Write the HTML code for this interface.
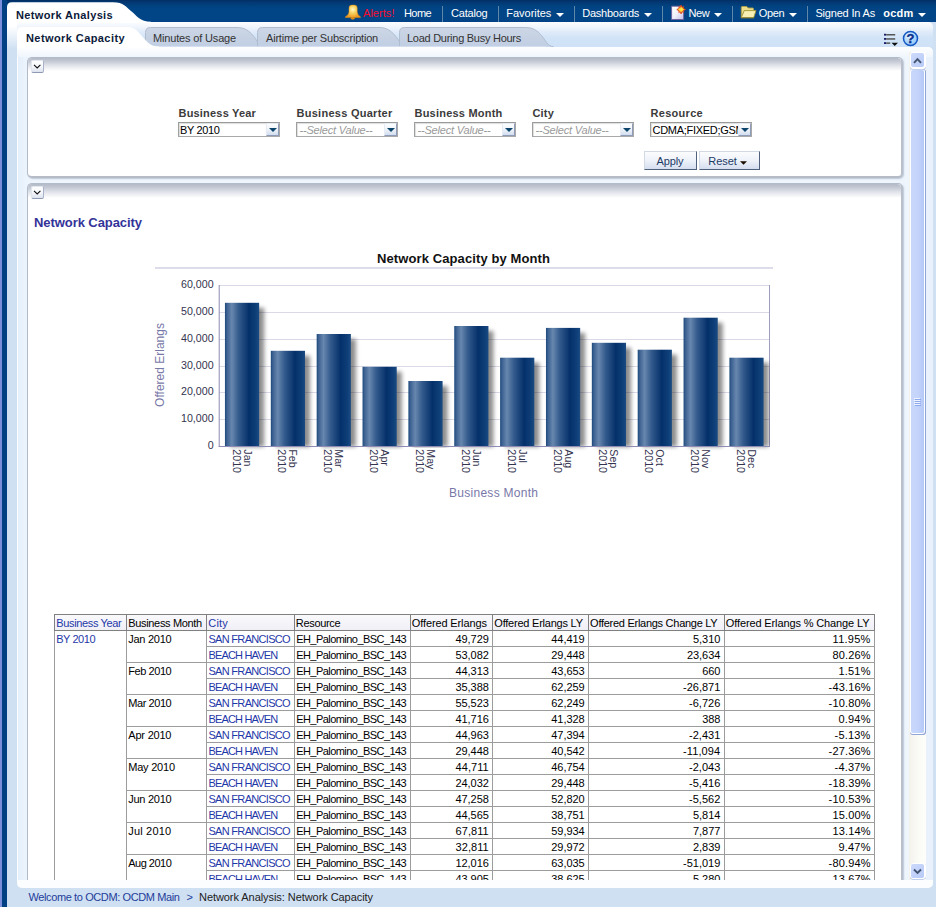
<!DOCTYPE html>
<html lang="en">
<head>
<meta charset="utf-8">
<title>Network Analysis - Network Capacity</title>
<style>
*{box-sizing:border-box;margin:0;padding:0}
html,body{width:936px;height:907px;overflow:hidden}
body{position:relative;background:#cfe0f3;font-family:"Liberation Sans",sans-serif;font-size:11px;color:#000}
.abs,.t,svg{position:absolute}
.t{white-space:pre;display:block}
#hdr{left:0;top:0;width:936px;height:22px;background:linear-gradient(#022c61 0,#033671 1.5px,#023a74 3px,#01427f 6px,#014586 9px,#014586 20px,#003f8a 22px)}
#lstrip1{left:0;top:0;width:2px;height:907px;background:#7a8edb}
#lstrip2{left:2px;top:0;width:5px;height:907px;background:#014083}
#shell{left:7px;top:22px;width:929px;height:866px;background:#cfe0f3}
#lgrad{left:7px;top:22px;width:10px;height:27px;background:linear-gradient(#fff 0,#fff 4px,#cfe0f3 100%)}
#tabbar{left:17px;top:22px;width:916px;height:25px;background:linear-gradient(#fcfdff 0,#f0f6fd 20%,#deeaf9 42%,#d1e3f7 65%,#cfe2f7 100%);border-radius:0 5px 0 0}
#inner{left:17px;top:47px;width:916px;height:841px;background:linear-gradient(to right,#e4effb 0,#ebf3fc 8px,#eef5fd 12px,#eef5fd 100%);border-radius:0 5px 5px 5px}
#innertop{left:17px;top:47px;width:916px;height:10px;background:linear-gradient(#fdfeff,#f0f6fd);border-radius:0 5px 0 0}
#innerbot{left:17px;top:880px;width:916px;height:8px;background:#fbfdff;border-radius:0 0 5px 5px}
#crumb{left:7px;top:888px;width:929px;height:19px;background:#cfe0f3}
.sep{top:6px;width:2px;height:16px;border-left:1px solid #003f80;border-right:1px solid #6089a9}
.panel{background:#fff;border-radius:5px;border:1px solid #b3bac8;border-right:2px solid #b9c0cc;border-bottom:2px solid #b5bcc8;box-shadow:1px 1px 1.5px rgba(150,160,182,.55)}
.ptop{left:0;top:0;right:0;height:13px;border-radius:4px 4px 0 0;background:linear-gradient(#b4bac8 0,#c4c9d4 25%,#e1e4ea 58%,#fff 100%)}
.cbtn{width:13px;height:13px;border-radius:2px;background:linear-gradient(#fff 0,#f4f6fa 50%,#dde3ee 100%);border:1px solid #e3e7ee;border-right-color:#a9b2c8;border-bottom-color:#8e99b4}
.sel{height:15px;width:102px;background:#fff;border:1px solid #a9aaa8;border-top-color:#9a9b99;border-left-color:#9fa09e;box-shadow:inset 1px 1px 1px #dcdedd}
.sel i{position:absolute;right:0;top:0;width:13px;height:13px;background:linear-gradient(#fdfeff,#eef3fa 50%,#d2ddee);border:1px solid #e6ebf4;border-right-color:#8e9cb9;border-bottom-color:#8e9cb9}
.sel i:after{content:"";position:absolute;left:1.5px;top:4px;border:4px solid transparent;border-top:4.5px solid #0b456c;border-bottom:0}
.btn{height:19.5px;background:linear-gradient(#fbfcfe 0,#eef2f9 50%,#d5deef 100%);border:1px solid #d3d9e4;border-right:1px solid #4f617c;border-bottom:1.5px solid #4f617c}
</style>
</head>
<body>
<div id="hdr" class="abs"></div>
<div id="shell" class="abs"></div>
<div id="lgrad" class="abs"></div>
<div id="tabbar" class="abs"></div>
<div id="inner" class="abs"></div>
<div class="abs" style="left:17px;top:52px;width:1px;height:830px;background:#fbfdff"></div><div class="abs" style="left:926px;top:52px;width:7px;height:830px;background:#e9f2fc"></div><div id="innertop" class="abs"></div>
<div id="crumb" class="abs"></div>
<svg style="left:0;top:0" width="160" height="30" viewBox="0 0 160 30"><defs><linearGradient id="pt" x1="0" y1="0" x2="0" y2="1"><stop offset="0" stop-color="#fff"/><stop offset="1" stop-color="#fff"/></linearGradient></defs><path d="M7,23 L7,7 Q7,2.2 12,2.2 L113,2.2 C124,2.2 126,7 131,11 S140,21.8 151,21.8 L151,23 Z" fill="#fff"/></svg>
<span class="t" style="left:16px;top:9.69px;font-size:11px;line-height:11px;font-weight:bold;color:#0b1a3a;letter-spacing:0.356px;">Network Analysis</span>
<svg style="left:344px;top:4px" width="18" height="17" viewBox="0 0 18 17"><defs><radialGradient id="bl" cx="8.8" cy="5.5" r="8.5" gradientUnits="userSpaceOnUse"><stop offset="0" stop-color="#fff7c8"/><stop offset=".4" stop-color="#f7d565"/><stop offset="1" stop-color="#ec951a"/></radialGradient></defs><ellipse cx="8.8" cy="14.3" rx="1.9" ry="1.4" fill="#d78a14"/><path d="M5,4 Q5,1.1 8,1.1 L10.2,1.1 Q13.2,1.1 13.2,4 L13.2,8 Q13.4,11 16.4,12.7 L16.4,13.6 L1.4,13.6 L1.4,12.7 Q4.8,11 5,8 Z" fill="url(#bl)" stroke="#e08f18" stroke-width=".5"/></svg><span class="t" style="left:363px;top:7.69px;font-size:11px;line-height:11px;color:#f80a2c;letter-spacing:0.045px;">Alerts!</span><span class="t" style="left:404px;top:7.69px;font-size:11px;line-height:11px;color:#fff;letter-spacing:-0.586px;">Home</span><span class="t" style="left:451px;top:7.69px;font-size:11px;line-height:11px;color:#fff;letter-spacing:-0.203px;">Catalog</span><span class="t" style="left:506.3px;top:7.69px;font-size:11px;line-height:11px;color:#fff;letter-spacing:-0.028px;">Favorites</span><svg style="left:555.5px;top:13px" width="8" height="4" viewBox="0 0 8 4"><path d="M0,0 H8 L4,4 Z" fill="#fff"/></svg><span class="t" style="left:582.3px;top:7.69px;font-size:11px;line-height:11px;color:#fff;letter-spacing:-0.263px;">Dashboards</span><svg style="left:643.5px;top:13px" width="8" height="4" viewBox="0 0 8 4"><path d="M0,0 H8 L4,4 Z" fill="#fff"/></svg><svg style="left:670px;top:3px" width="17" height="18" viewBox="0 0 17 18"><defs><linearGradient id="ng" x1="0" y1="0" x2="1" y2="1"><stop offset="0" stop-color="#fff"/><stop offset=".5" stop-color="#f1f0fa"/><stop offset="1" stop-color="#c4c0e6"/></linearGradient></defs><path d="M1.6,3.2 H10.5 L13.6,6.3 V16.5 H1.6 Z" fill="url(#ng)" stroke="#6e609e" stroke-width=".9"/><path d="M11.1,2.2 L12,4.6 L13.4,3.4 L13.1,5.4 L15.4,6.6 L13.1,7.6 L13.4,9.6 L12,8.5 L11.1,10.9 L10.2,8.5 L8.8,9.6 L9.1,7.6 L6.8,6.6 L9.1,5.4 L8.8,3.4 L10.2,4.6 Z" fill="#ffe23c" stroke="#de3f16" stroke-width=".9" stroke-linejoin="round"/></svg><span class="t" style="left:688.6px;top:7.69px;font-size:11px;line-height:11px;color:#fff;letter-spacing:-0.439px;">New</span><svg style="left:713.7px;top:13px" width="8" height="4" viewBox="0 0 8 4"><path d="M0,0 H8 L4,4 Z" fill="#fff"/></svg><svg style="left:740px;top:5px" width="17" height="14" viewBox="0 0 17 14"><path d="M1.3,12.4 V2.4 Q1.3,1.5 2.2,1.5 H6.8 L8,3 H12.6 Q13.5,3 13.5,3.9 V5.6 H4.5 Z" fill="#e9dd8c" stroke="#b0a044" stroke-width=".9"/><path d="M4.3,5.6 H16 L13.7,12.6 H1.3 Z" fill="#f6f0b4" stroke="#a89838" stroke-width=".9" stroke-linejoin="round"/><path d="M1.3,12.9 H13.7" stroke="#94842c" stroke-width=".8"/></svg><span class="t" style="left:758.7px;top:7.69px;font-size:11px;line-height:11px;color:#fff;letter-spacing:-0.355px;">Open</span><svg style="left:788.7px;top:13px" width="8" height="4" viewBox="0 0 8 4"><path d="M0,0 H8 L4,4 Z" fill="#fff"/></svg><span class="t" style="left:815.4px;top:7.69px;font-size:11px;line-height:11px;color:#fff;letter-spacing:-0.182px;">Signed In As</span><span class="t" style="left:883.2px;top:7.69px;font-size:11px;line-height:11px;font-weight:bold;color:#fff;letter-spacing:0.289px;">ocdm</span><svg style="left:917.5px;top:13px" width="8" height="4" viewBox="0 0 8 4"><path d="M0,0 H8 L4,4 Z" fill="#fff"/></svg><div class="abs sep" style="left:441px"></div><div class="abs sep" style="left:497px"></div><div class="abs sep" style="left:573px"></div><div class="abs sep" style="left:661px"></div><div class="abs sep" style="left:731px"></div><div class="abs sep" style="left:806px"></div>
<svg style="left:0;top:22px" width="936" height="26" viewBox="0 22 936 26"><defs><linearGradient id="tg" x1="0" y1="0" x2="0" y2="1"><stop offset="0" stop-color="#ccd6e5"/><stop offset=".5" stop-color="#c6d1e3"/><stop offset="1" stop-color="#c1cfe4"/></linearGradient></defs><path d="M145.5,46.6 L145.5,32.5 Q145.5,27.5 150.5,27.5 L237,27.5 C245,27.5 249,31 253,35.5 S259,46.6 265,46.6 Z" fill="url(#tg)"/><path d="M145.5,46.6 L145.5,32.5 Q145.5,27.5 150.5,27.5 L237,27.5 C245,27.5 249,31 253,35.5 S259,46.6 265,46.6" fill="none" stroke="#b1bdd0" stroke-width="1"/><path d="M257.5,46.6 L257.5,32.5 Q257.5,27.5 262.5,27.5 L379,27.5 C387,27.5 391,31 395,35.5 S401,46.6 407,46.6 Z" fill="url(#tg)"/><path d="M257.5,46.6 L257.5,32.5 Q257.5,27.5 262.5,27.5 L379,27.5 C387,27.5 391,31 395,35.5 S401,46.6 407,46.6" fill="none" stroke="#b1bdd0" stroke-width="1"/><path d="M399.5,46.6 L399.5,32.5 Q399.5,27.5 404.5,27.5 L525.5,27.5 C533.5,27.5 537.5,31 541.5,35.5 S547.5,46.6 553.5,46.6 Z" fill="url(#tg)"/><path d="M399.5,46.6 L399.5,32.5 Q399.5,27.5 404.5,27.5 L525.5,27.5 C533.5,27.5 537.5,31 541.5,35.5 S547.5,46.6 553.5,46.6" fill="none" stroke="#b1bdd0" stroke-width="1"/><rect x="146" y="46" width="400" height="1" fill="#d9e2ef" opacity=".7"/><path d="M17,48 L17,32 Q17,27 22,27 L127,27 C136,27 139,33 143,37.3 S150,46.6 159,46.6 L159,48 Z" fill="#fff"/></svg><span class="t" style="left:26px;top:32.69px;font-size:11px;line-height:11px;font-weight:bold;color:#0b1a3a;letter-spacing:0.418px;">Network Capacity</span><span class="t" style="left:153px;top:32.69px;font-size:11px;line-height:11px;color:#333;letter-spacing:-0.163px;">Minutes of Usage</span><span class="t" style="left:266px;top:32.69px;font-size:11px;line-height:11px;color:#333;letter-spacing:-0.199px;">Airtime per Subscription</span><span class="t" style="left:407px;top:32.69px;font-size:11px;line-height:11px;color:#333;letter-spacing:-0.266px;">Load During Busy Hours</span><svg style="left:883px;top:32px" width="16" height="15" viewBox="0 0 16 15"><rect x="1" y="1.8" width="2.2" height="1.8" fill="#1c1c66"/><rect x="3.2" y="2" width="9" height="1.5" fill="#555"/><rect x="1" y="6" width="2.2" height="1.8" fill="#1c1c66"/><rect x="3.2" y="6.2" width="9" height="1.5" fill="#555"/><rect x="1" y="10.2" width="2.2" height="1.8" fill="#1c1c66"/><rect x="3.2" y="10.4" width="4" height="1.5" fill="#555"/><path d="M8.5,10.8 H15 L11.75,14 Z" fill="#111"/></svg><svg style="left:902px;top:30px" width="17" height="17" viewBox="0 0 17 17"><defs><radialGradient id="hg" cx=".4" cy=".3" r=".8"><stop offset="0" stop-color="#e6f4ff"/><stop offset="1" stop-color="#7fbcf8"/></radialGradient></defs><circle cx="8.5" cy="8.5" r="7" fill="url(#hg)" stroke="#1458c4" stroke-width="1.5"/><text x="8.5" y="13.1" text-anchor="middle" font-family="Liberation Sans, sans-serif" font-weight="bold" font-size="13" fill="#0a2f8f" stroke="#0a2f8f" stroke-width=".35">?</text></svg>
<div id="view" class="abs" style="left:0;top:0;width:936px;height:880px;overflow:hidden"><div class="abs panel" style="left:27px;top:57px;width:876px;height:121px"><div class="abs ptop"></div></div><div class="abs cbtn" style="left:31px;top:60px"><svg style="left:1.2px;top:3.1px" width="9" height="5" viewBox="0 0 9 5"><path d="M1,0.8 L4.2,4 L7.4,0.8" fill="none" stroke="#111" stroke-width="1.1"/></svg></div><span class="t" style="left:178.5px;top:108.39px;font-size:11px;line-height:11px;font-weight:bold;color:#3b3b3b;letter-spacing:0.191px;">Business Year</span><span class="t" style="left:296.5px;top:108.39px;font-size:11px;line-height:11px;font-weight:bold;color:#3b3b3b;letter-spacing:0.269px;">Business Quarter</span><span class="t" style="left:414.5px;top:108.39px;font-size:11px;line-height:11px;font-weight:bold;color:#3b3b3b;letter-spacing:0.218px;">Business Month</span><span class="t" style="left:532.5px;top:108.39px;font-size:11px;line-height:11px;font-weight:bold;color:#3b3b3b;letter-spacing:0.180px;">City</span><span class="t" style="left:650.5px;top:108.39px;font-size:11px;line-height:11px;font-weight:bold;color:#3b3b3b;letter-spacing:0.295px;">Resource</span><div class="abs sel" style="left:178px;top:122px"><i></i></div><span class="t" style="left:180px;top:125.19px;font-size:11px;line-height:11px;letter-spacing:-0.359px;">BY 2010</span><div class="abs sel" style="left:296px;top:122px"><i></i></div><span class="t" style="left:299.5px;top:125.19px;font-size:11px;line-height:11px;font-style:italic;color:#9a9a9a;letter-spacing:-0.188px;">--Select Value--</span><div class="abs sel" style="left:414px;top:122px"><i></i></div><span class="t" style="left:417.5px;top:125.19px;font-size:11px;line-height:11px;font-style:italic;color:#9a9a9a;letter-spacing:-0.188px;">--Select Value--</span><div class="abs sel" style="left:532px;top:122px"><i></i></div><span class="t" style="left:535.5px;top:125.19px;font-size:11px;line-height:11px;font-style:italic;color:#9a9a9a;letter-spacing:-0.188px;">--Select Value--</span><div class="abs sel" style="left:650px;top:122px"><i></i></div><div class="abs" style="left:652px;top:124px;width:86px;height:13px;overflow:hidden"><span class="t" style="left:0.5px;top:1.19px;font-size:11px;line-height:11px;letter-spacing:-0.282px;">CDMA;FIXED;GSM</span></div><div class="abs btn" style="left:644px;top:150.5px;width:53px"></div><span class="t" style="left:656.5px;top:155.69px;font-size:11px;line-height:11px;color:#1d3a66;letter-spacing:-0.146px;">Apply</span><div class="abs btn" style="left:699px;top:150.5px;width:61px"></div><span class="t" style="left:708.3px;top:155.69px;font-size:11px;line-height:11px;color:#1d3a66;letter-spacing:-0.070px;">Reset</span><svg style="left:740.2px;top:161px" width="7" height="3.8" viewBox="0 0 8 4"><path d="M0,0 H8 L4,4 Z" fill="#1a0d00"/></svg><div class="abs panel" style="left:27px;top:183px;width:876px;height:720px;border-radius:5px 5px 0 0"><div class="abs ptop" style="height:14px"></div></div><div class="abs cbtn" style="left:31px;top:186px"><svg style="left:1.2px;top:3.1px" width="9" height="5" viewBox="0 0 9 5"><path d="M1,0.8 L4.2,4 L7.4,0.8" fill="none" stroke="#111" stroke-width="1.1"/></svg></div><span class="t" style="left:34px;top:216.30px;font-size:13px;line-height:13px;font-weight:bold;color:#333399;letter-spacing:-0.068px;">Network Capacity</span><svg style="left:0;top:240px" width="936" height="280" viewBox="0 240 936 280" font-family="Liberation Sans, sans-serif"><defs><linearGradient id="bg" x1="0" y1="0" x2="1" y2="0"><stop offset="0" stop-color="#1d497c"/><stop offset=".06" stop-color="#3d6292"/><stop offset=".2" stop-color="#6787ae"/><stop offset=".4" stop-color="#345b8d"/><stop offset=".7" stop-color="#04306a"/><stop offset=".9" stop-color="#0f3f78"/><stop offset="1" stop-color="#1b4b82"/></linearGradient><filter id="sh" x="-20%" y="-10%" width="160%" height="120%"><feGaussianBlur in="SourceAlpha" stdDeviation="2.2"/><feOffset dx="4.5" dy="4.5"/><feComponentTransfer><feFuncA type="linear" slope=".45"/></feComponentTransfer></filter><clipPath id="pc"><rect x="219" y="280" width="551" height="176"/></clipPath></defs><text x="463.5" y="262.5" text-anchor="middle" font-size="13" font-weight="bold" fill="#111" textLength="173" lengthAdjust="spacing">Network Capacity by Month</text><rect x="155" y="267.1" width="618" height="1.7" fill="#d6d6e8"/><rect x="219" y="285" width="551" height="1" fill="#d9d9e7"/><rect x="219" y="312" width="551" height="1" fill="#d9d9e7"/><rect x="219" y="339" width="551" height="1" fill="#d9d9e7"/><rect x="219" y="366" width="551" height="1" fill="#d9d9e7"/><rect x="219" y="392" width="551" height="1" fill="#d9d9e7"/><rect x="219" y="419" width="551" height="1" fill="#d9d9e7"/><rect x="769" y="285" width="1" height="161" fill="#9d9dc0"/><g clip-path="url(#pc)"><rect x="224.95" y="302.80" width="34.20" height="139.00" fill="#000" filter="url(#sh)"/><rect x="270.81" y="350.80" width="34.20" height="91.00" fill="#000" filter="url(#sh)"/><rect x="316.67" y="334.00" width="34.20" height="107.80" fill="#000" filter="url(#sh)"/><rect x="362.53" y="366.80" width="34.20" height="75.00" fill="#000" filter="url(#sh)"/><rect x="408.39" y="381.00" width="34.20" height="60.80" fill="#000" filter="url(#sh)"/><rect x="454.25" y="326.00" width="34.20" height="115.80" fill="#000" filter="url(#sh)"/><rect x="500.11" y="357.70" width="34.20" height="84.10" fill="#000" filter="url(#sh)"/><rect x="545.97" y="327.90" width="34.20" height="113.90" fill="#000" filter="url(#sh)"/><rect x="591.83" y="342.80" width="34.20" height="99.00" fill="#000" filter="url(#sh)"/><rect x="637.69" y="349.70" width="34.20" height="92.10" fill="#000" filter="url(#sh)"/><rect x="683.55" y="317.70" width="34.20" height="124.10" fill="#000" filter="url(#sh)"/><rect x="729.41" y="357.70" width="34.20" height="84.10" fill="#000" filter="url(#sh)"/></g><rect x="224.95" y="302.80" width="34.20" height="143.50" fill="url(#bg)"/><rect x="270.81" y="350.80" width="34.20" height="95.50" fill="url(#bg)"/><rect x="316.67" y="334.00" width="34.20" height="112.30" fill="url(#bg)"/><rect x="362.53" y="366.80" width="34.20" height="79.50" fill="url(#bg)"/><rect x="408.39" y="381.00" width="34.20" height="65.30" fill="url(#bg)"/><rect x="454.25" y="326.00" width="34.20" height="120.30" fill="url(#bg)"/><rect x="500.11" y="357.70" width="34.20" height="88.60" fill="url(#bg)"/><rect x="545.97" y="327.90" width="34.20" height="118.40" fill="url(#bg)"/><rect x="591.83" y="342.80" width="34.20" height="103.50" fill="url(#bg)"/><rect x="637.69" y="349.70" width="34.20" height="96.60" fill="url(#bg)"/><rect x="683.55" y="317.70" width="34.20" height="128.60" fill="url(#bg)"/><rect x="729.41" y="357.70" width="34.20" height="88.60" fill="url(#bg)"/><rect x="218.7" y="285" width="1" height="162" fill="#8c8cb6"/><rect x="218.7" y="446" width="551.3" height="1" fill="#8c8cb6"/><text x="213.6" y="288.30" text-anchor="end" font-size="10.67" fill="#33334f">60,000</text><text x="213.6" y="315.30" text-anchor="end" font-size="10.67" fill="#33334f">50,000</text><text x="213.6" y="342.30" text-anchor="end" font-size="10.67" fill="#33334f">40,000</text><text x="213.6" y="369.30" text-anchor="end" font-size="10.67" fill="#33334f">30,000</text><text x="213.6" y="395.30" text-anchor="end" font-size="10.67" fill="#33334f">20,000</text><text x="213.6" y="422.30" text-anchor="end" font-size="10.67" fill="#33334f">10,000</text><text x="213.6" y="449.30" text-anchor="end" font-size="10.67" fill="#33334f">0</text><text transform="translate(243.55,449.3) rotate(90)" font-size="10.67" fill="#33334f">Jan</text><text transform="translate(232.55,449.3) rotate(90)" font-size="10.67" fill="#33334f">2010</text><text transform="translate(289.41,449.3) rotate(90)" font-size="10.67" fill="#33334f">Feb</text><text transform="translate(278.41,449.3) rotate(90)" font-size="10.67" fill="#33334f">2010</text><text transform="translate(335.27,449.3) rotate(90)" font-size="10.67" fill="#33334f">Mar</text><text transform="translate(324.27,449.3) rotate(90)" font-size="10.67" fill="#33334f">2010</text><text transform="translate(381.13,449.3) rotate(90)" font-size="10.67" fill="#33334f">Apr</text><text transform="translate(370.13,449.3) rotate(90)" font-size="10.67" fill="#33334f">2010</text><text transform="translate(426.99,449.3) rotate(90)" font-size="10.67" fill="#33334f">May</text><text transform="translate(415.99,449.3) rotate(90)" font-size="10.67" fill="#33334f">2010</text><text transform="translate(472.85,449.3) rotate(90)" font-size="10.67" fill="#33334f">Jun</text><text transform="translate(461.85,449.3) rotate(90)" font-size="10.67" fill="#33334f">2010</text><text transform="translate(518.71,449.3) rotate(90)" font-size="10.67" fill="#33334f">Jul</text><text transform="translate(507.71,449.3) rotate(90)" font-size="10.67" fill="#33334f">2010</text><text transform="translate(564.57,449.3) rotate(90)" font-size="10.67" fill="#33334f">Aug</text><text transform="translate(553.57,449.3) rotate(90)" font-size="10.67" fill="#33334f">2010</text><text transform="translate(610.43,449.3) rotate(90)" font-size="10.67" fill="#33334f">Sep</text><text transform="translate(599.43,449.3) rotate(90)" font-size="10.67" fill="#33334f">2010</text><text transform="translate(656.29,449.3) rotate(90)" font-size="10.67" fill="#33334f">Oct</text><text transform="translate(645.29,449.3) rotate(90)" font-size="10.67" fill="#33334f">2010</text><text transform="translate(702.15,449.3) rotate(90)" font-size="10.67" fill="#33334f">Nov</text><text transform="translate(691.15,449.3) rotate(90)" font-size="10.67" fill="#33334f">2010</text><text transform="translate(748.01,449.3) rotate(90)" font-size="10.67" fill="#33334f">Dec</text><text transform="translate(737.01,449.3) rotate(90)" font-size="10.67" fill="#33334f">2010</text><text transform="translate(163.5,365) rotate(-90)" text-anchor="middle" font-size="12" fill="#7878a8">Offered Erlangs</text><text x="493.5" y="497" text-anchor="middle" font-size="12" fill="#7878a8" textLength="89" lengthAdjust="spacing">Business Month</text></svg><div class="abs" style="left:54px;top:614px;width:821px;height:16px;background:linear-gradient(#fafafd,#efeff6)"></div><div class="abs" style="left:54px;top:614px;width:1px;height:288px;background:#9c9c9c"></div><div class="abs" style="left:126px;top:614px;width:1px;height:288px;background:#9c9c9c"></div><div class="abs" style="left:206px;top:614px;width:1px;height:288px;background:#9c9c9c"></div><div class="abs" style="left:293.5px;top:614px;width:1px;height:288px;background:#9c9c9c"></div><div class="abs" style="left:409.5px;top:614px;width:1px;height:288px;background:#9c9c9c"></div><div class="abs" style="left:492px;top:614px;width:1px;height:288px;background:#9c9c9c"></div><div class="abs" style="left:587.8px;top:614px;width:1px;height:288px;background:#9c9c9c"></div><div class="abs" style="left:723.5px;top:614px;width:1px;height:288px;background:#9c9c9c"></div><div class="abs" style="left:873.8px;top:614px;width:1px;height:288px;background:#9c9c9c"></div><div class="abs" style="left:54px;top:614px;width:1px;height:16.5px;background:#808080"></div><div class="abs" style="left:126px;top:614px;width:1px;height:16.5px;background:#808080"></div><div class="abs" style="left:206px;top:614px;width:1px;height:16.5px;background:#808080"></div><div class="abs" style="left:293.5px;top:614px;width:1px;height:16.5px;background:#808080"></div><div class="abs" style="left:409.5px;top:614px;width:1px;height:16.5px;background:#808080"></div><div class="abs" style="left:492px;top:614px;width:1px;height:16.5px;background:#808080"></div><div class="abs" style="left:587.8px;top:614px;width:1px;height:16.5px;background:#808080"></div><div class="abs" style="left:723.5px;top:614px;width:1px;height:16.5px;background:#808080"></div><div class="abs" style="left:873.8px;top:614px;width:1px;height:16.5px;background:#808080"></div><div class="abs" style="left:54px;top:614px;width:820.8px;height:1px;background:#808080"></div><div class="abs" style="left:54px;top:629.5px;width:820.8px;height:1px;background:#808080"></div><div class="abs" style="left:206px;top:645.5px;width:668.8px;height:1px;background:#9c9c9c"></div><div class="abs" style="left:126px;top:661.5px;width:748.8px;height:1px;background:#9c9c9c"></div><div class="abs" style="left:206px;top:677.5px;width:668.8px;height:1px;background:#9c9c9c"></div><div class="abs" style="left:126px;top:693.5px;width:748.8px;height:1px;background:#9c9c9c"></div><div class="abs" style="left:206px;top:709.5px;width:668.8px;height:1px;background:#9c9c9c"></div><div class="abs" style="left:126px;top:725.5px;width:748.8px;height:1px;background:#9c9c9c"></div><div class="abs" style="left:206px;top:741.5px;width:668.8px;height:1px;background:#9c9c9c"></div><div class="abs" style="left:126px;top:757.5px;width:748.8px;height:1px;background:#9c9c9c"></div><div class="abs" style="left:206px;top:773.5px;width:668.8px;height:1px;background:#9c9c9c"></div><div class="abs" style="left:126px;top:789.5px;width:748.8px;height:1px;background:#9c9c9c"></div><div class="abs" style="left:206px;top:805.5px;width:668.8px;height:1px;background:#9c9c9c"></div><div class="abs" style="left:126px;top:821.5px;width:748.8px;height:1px;background:#9c9c9c"></div><div class="abs" style="left:206px;top:837.5px;width:668.8px;height:1px;background:#9c9c9c"></div><div class="abs" style="left:126px;top:853.5px;width:748.8px;height:1px;background:#9c9c9c"></div><div class="abs" style="left:206px;top:869.5px;width:668.8px;height:1px;background:#9c9c9c"></div><div class="abs" style="left:126px;top:885.5px;width:748.8px;height:1px;background:#9c9c9c"></div><div class="abs" style="left:206px;top:901.5px;width:668.8px;height:1px;background:#9c9c9c"></div><span class="t" style="left:56.3px;top:617.69px;font-size:11px;line-height:11px;color:#1f38a8;letter-spacing:-0.363px;">Business Year</span><span class="t" style="left:128.3px;top:617.69px;font-size:11px;line-height:11px;letter-spacing:-0.340px;">Business Month</span><span class="t" style="left:208.3px;top:617.69px;font-size:11px;line-height:11px;color:#1f38a8;letter-spacing:0.137px;">City</span><span class="t" style="left:295.8px;top:617.69px;font-size:11px;line-height:11px;letter-spacing:-0.322px;">Resource</span><span class="t" style="left:411.8px;top:617.69px;font-size:11px;line-height:11px;letter-spacing:-0.123px;">Offered Erlangs</span><span class="t" style="left:494.3px;top:617.69px;font-size:11px;line-height:11px;letter-spacing:-0.225px;">Offered Erlangs LY</span><span class="t" style="left:590.1px;top:617.69px;font-size:11px;line-height:11px;letter-spacing:-0.273px;">Offered Erlangs Change LY</span><span class="t" style="left:725.8px;top:617.69px;font-size:11px;line-height:11px;letter-spacing:-0.125px;">Offered Erlangs % Change LY</span><span class="t" style="left:56.2px;top:633.79px;font-size:11px;line-height:11px;color:#1f38a8;letter-spacing:-0.431px;">BY 2010</span><span class="t" style="left:128.3px;top:633.79px;font-size:11px;line-height:11px;letter-spacing:-0.283px;">Jan 2010</span><span class="t" style="left:208.4px;top:633.79px;font-size:11px;line-height:11px;color:#1f38a8;letter-spacing:-0.682px;">SAN FRANCISCO</span><span class="t" style="left:296.2px;top:633.79px;font-size:11px;line-height:11px;letter-spacing:-0.551px;">EH_Palomino_BSC_143</span><span class="t" style="left:455.5px;top:633.79px;font-size:11px;line-height:11px;letter-spacing:-0.059px;">49,729</span><span class="t" style="left:551.3px;top:633.79px;font-size:11px;line-height:11px;letter-spacing:-0.059px;">44,419</span><span class="t" style="left:693px;top:633.79px;font-size:11px;line-height:11px;letter-spacing:-0.046px;">5,310</span><span class="t" style="left:832.6px;top:633.79px;font-size:11px;line-height:11px;letter-spacing:0.250px;">11.95%</span><span class="t" style="left:208.4px;top:649.79px;font-size:11px;line-height:11px;color:#1f38a8;letter-spacing:-0.822px;">BEACH HAVEN</span><span class="t" style="left:296.2px;top:649.79px;font-size:11px;line-height:11px;letter-spacing:-0.551px;">EH_Palomino_BSC_143</span><span class="t" style="left:455.5px;top:649.79px;font-size:11px;line-height:11px;letter-spacing:-0.059px;">53,082</span><span class="t" style="left:551.3px;top:649.79px;font-size:11px;line-height:11px;letter-spacing:-0.059px;">29,448</span><span class="t" style="left:687px;top:649.79px;font-size:11px;line-height:11px;letter-spacing:-0.059px;">23,634</span><span class="t" style="left:832.6px;top:649.79px;font-size:11px;line-height:11px;letter-spacing:0.115px;">80.26%</span><span class="t" style="left:128.3px;top:665.79px;font-size:11px;line-height:11px;letter-spacing:-0.436px;">Feb 2010</span><span class="t" style="left:208.4px;top:665.79px;font-size:11px;line-height:11px;color:#1f38a8;letter-spacing:-0.682px;">SAN FRANCISCO</span><span class="t" style="left:296.2px;top:665.79px;font-size:11px;line-height:11px;letter-spacing:-0.551px;">EH_Palomino_BSC_143</span><span class="t" style="left:455.5px;top:665.79px;font-size:11px;line-height:11px;letter-spacing:-0.059px;">44,313</span><span class="t" style="left:551.3px;top:665.79px;font-size:11px;line-height:11px;letter-spacing:-0.059px;">43,653</span><span class="t" style="left:702.3px;top:665.79px;font-size:11px;line-height:11px;letter-spacing:-0.120px;">660</span><span class="t" style="left:838.6px;top:665.79px;font-size:11px;line-height:11px;letter-spacing:0.159px;">1.51%</span><span class="t" style="left:208.4px;top:681.79px;font-size:11px;line-height:11px;color:#1f38a8;letter-spacing:-0.822px;">BEACH HAVEN</span><span class="t" style="left:296.2px;top:681.79px;font-size:11px;line-height:11px;letter-spacing:-0.551px;">EH_Palomino_BSC_143</span><span class="t" style="left:455.5px;top:681.79px;font-size:11px;line-height:11px;letter-spacing:-0.059px;">35,388</span><span class="t" style="left:551.3px;top:681.79px;font-size:11px;line-height:11px;letter-spacing:-0.059px;">62,259</span><span class="t" style="left:683px;top:681.79px;font-size:11px;line-height:11px;letter-spacing:-0.002px;">-26,871</span><span class="t" style="left:828.6px;top:681.79px;font-size:11px;line-height:11px;letter-spacing:0.145px;">-43.16%</span><span class="t" style="left:128.3px;top:697.79px;font-size:11px;line-height:11px;letter-spacing:-0.436px;">Mar 2010</span><span class="t" style="left:208.4px;top:697.79px;font-size:11px;line-height:11px;color:#1f38a8;letter-spacing:-0.682px;">SAN FRANCISCO</span><span class="t" style="left:296.2px;top:697.79px;font-size:11px;line-height:11px;letter-spacing:-0.551px;">EH_Palomino_BSC_143</span><span class="t" style="left:455.5px;top:697.79px;font-size:11px;line-height:11px;letter-spacing:-0.059px;">55,523</span><span class="t" style="left:551.3px;top:697.79px;font-size:11px;line-height:11px;letter-spacing:-0.059px;">62,249</span><span class="t" style="left:689px;top:697.79px;font-size:11px;line-height:11px;letter-spacing:0.016px;">-6,726</span><span class="t" style="left:828.6px;top:697.79px;font-size:11px;line-height:11px;letter-spacing:0.145px;">-10.80%</span><span class="t" style="left:208.4px;top:713.79px;font-size:11px;line-height:11px;color:#1f38a8;letter-spacing:-0.822px;">BEACH HAVEN</span><span class="t" style="left:296.2px;top:713.79px;font-size:11px;line-height:11px;letter-spacing:-0.551px;">EH_Palomino_BSC_143</span><span class="t" style="left:455.5px;top:713.79px;font-size:11px;line-height:11px;letter-spacing:-0.059px;">41,716</span><span class="t" style="left:551.3px;top:713.79px;font-size:11px;line-height:11px;letter-spacing:-0.059px;">41,328</span><span class="t" style="left:702.3px;top:713.79px;font-size:11px;line-height:11px;letter-spacing:-0.120px;">388</span><span class="t" style="left:838.6px;top:713.79px;font-size:11px;line-height:11px;letter-spacing:0.159px;">0.94%</span><span class="t" style="left:128.3px;top:729.79px;font-size:11px;line-height:11px;letter-spacing:-0.207px;">Apr 2010</span><span class="t" style="left:208.4px;top:729.79px;font-size:11px;line-height:11px;color:#1f38a8;letter-spacing:-0.682px;">SAN FRANCISCO</span><span class="t" style="left:296.2px;top:729.79px;font-size:11px;line-height:11px;letter-spacing:-0.551px;">EH_Palomino_BSC_143</span><span class="t" style="left:455.5px;top:729.79px;font-size:11px;line-height:11px;letter-spacing:-0.059px;">44,963</span><span class="t" style="left:551.3px;top:729.79px;font-size:11px;line-height:11px;letter-spacing:-0.059px;">47,394</span><span class="t" style="left:689px;top:729.79px;font-size:11px;line-height:11px;letter-spacing:0.016px;">-2,431</span><span class="t" style="left:834.6px;top:729.79px;font-size:11px;line-height:11px;letter-spacing:0.190px;">-5.13%</span><span class="t" style="left:208.4px;top:745.79px;font-size:11px;line-height:11px;color:#1f38a8;letter-spacing:-0.822px;">BEACH HAVEN</span><span class="t" style="left:296.2px;top:745.79px;font-size:11px;line-height:11px;letter-spacing:-0.551px;">EH_Palomino_BSC_143</span><span class="t" style="left:455.5px;top:745.79px;font-size:11px;line-height:11px;letter-spacing:-0.059px;">29,448</span><span class="t" style="left:551.3px;top:745.79px;font-size:11px;line-height:11px;letter-spacing:-0.059px;">40,542</span><span class="t" style="left:683px;top:745.79px;font-size:11px;line-height:11px;letter-spacing:0.114px;">-11,094</span><span class="t" style="left:828.6px;top:745.79px;font-size:11px;line-height:11px;letter-spacing:0.145px;">-27.36%</span><span class="t" style="left:128.3px;top:761.79px;font-size:11px;line-height:11px;letter-spacing:-0.227px;">May 2010</span><span class="t" style="left:208.4px;top:761.79px;font-size:11px;line-height:11px;color:#1f38a8;letter-spacing:-0.682px;">SAN FRANCISCO</span><span class="t" style="left:296.2px;top:761.79px;font-size:11px;line-height:11px;letter-spacing:-0.551px;">EH_Palomino_BSC_143</span><span class="t" style="left:455.5px;top:761.79px;font-size:11px;line-height:11px;letter-spacing:0.079px;">44,711</span><span class="t" style="left:551.3px;top:761.79px;font-size:11px;line-height:11px;letter-spacing:-0.059px;">46,754</span><span class="t" style="left:689px;top:761.79px;font-size:11px;line-height:11px;letter-spacing:0.016px;">-2,043</span><span class="t" style="left:834.6px;top:761.79px;font-size:11px;line-height:11px;letter-spacing:0.190px;">-4.37%</span><span class="t" style="left:208.4px;top:777.79px;font-size:11px;line-height:11px;color:#1f38a8;letter-spacing:-0.822px;">BEACH HAVEN</span><span class="t" style="left:296.2px;top:777.79px;font-size:11px;line-height:11px;letter-spacing:-0.551px;">EH_Palomino_BSC_143</span><span class="t" style="left:455.5px;top:777.79px;font-size:11px;line-height:11px;letter-spacing:-0.059px;">24,032</span><span class="t" style="left:551.3px;top:777.79px;font-size:11px;line-height:11px;letter-spacing:-0.059px;">29,448</span><span class="t" style="left:689px;top:777.79px;font-size:11px;line-height:11px;letter-spacing:0.016px;">-5,416</span><span class="t" style="left:828.6px;top:777.79px;font-size:11px;line-height:11px;letter-spacing:0.145px;">-18.39%</span><span class="t" style="left:128.3px;top:793.79px;font-size:11px;line-height:11px;letter-spacing:-0.283px;">Jun 2010</span><span class="t" style="left:208.4px;top:793.79px;font-size:11px;line-height:11px;color:#1f38a8;letter-spacing:-0.682px;">SAN FRANCISCO</span><span class="t" style="left:296.2px;top:793.79px;font-size:11px;line-height:11px;letter-spacing:-0.551px;">EH_Palomino_BSC_143</span><span class="t" style="left:455.5px;top:793.79px;font-size:11px;line-height:11px;letter-spacing:-0.059px;">47,258</span><span class="t" style="left:551.3px;top:793.79px;font-size:11px;line-height:11px;letter-spacing:-0.059px;">52,820</span><span class="t" style="left:689px;top:793.79px;font-size:11px;line-height:11px;letter-spacing:0.016px;">-5,562</span><span class="t" style="left:828.6px;top:793.79px;font-size:11px;line-height:11px;letter-spacing:0.145px;">-10.53%</span><span class="t" style="left:208.4px;top:809.79px;font-size:11px;line-height:11px;color:#1f38a8;letter-spacing:-0.822px;">BEACH HAVEN</span><span class="t" style="left:296.2px;top:809.79px;font-size:11px;line-height:11px;letter-spacing:-0.551px;">EH_Palomino_BSC_143</span><span class="t" style="left:455.5px;top:809.79px;font-size:11px;line-height:11px;letter-spacing:-0.059px;">44,565</span><span class="t" style="left:551.3px;top:809.79px;font-size:11px;line-height:11px;letter-spacing:-0.059px;">38,751</span><span class="t" style="left:693px;top:809.79px;font-size:11px;line-height:11px;letter-spacing:-0.046px;">5,814</span><span class="t" style="left:832.6px;top:809.79px;font-size:11px;line-height:11px;letter-spacing:0.115px;">15.00%</span><span class="t" style="left:128.3px;top:825.79px;font-size:11px;line-height:11px;letter-spacing:0.176px;">Jul 2010</span><span class="t" style="left:208.4px;top:825.79px;font-size:11px;line-height:11px;color:#1f38a8;letter-spacing:-0.682px;">SAN FRANCISCO</span><span class="t" style="left:296.2px;top:825.79px;font-size:11px;line-height:11px;letter-spacing:-0.551px;">EH_Palomino_BSC_143</span><span class="t" style="left:455.5px;top:825.79px;font-size:11px;line-height:11px;letter-spacing:0.079px;">67,811</span><span class="t" style="left:551.3px;top:825.79px;font-size:11px;line-height:11px;letter-spacing:-0.059px;">59,934</span><span class="t" style="left:693px;top:825.79px;font-size:11px;line-height:11px;letter-spacing:-0.046px;">7,877</span><span class="t" style="left:832.6px;top:825.79px;font-size:11px;line-height:11px;letter-spacing:0.115px;">13.14%</span><span class="t" style="left:208.4px;top:841.79px;font-size:11px;line-height:11px;color:#1f38a8;letter-spacing:-0.822px;">BEACH HAVEN</span><span class="t" style="left:296.2px;top:841.79px;font-size:11px;line-height:11px;letter-spacing:-0.551px;">EH_Palomino_BSC_143</span><span class="t" style="left:455.5px;top:841.79px;font-size:11px;line-height:11px;letter-spacing:0.079px;">32,811</span><span class="t" style="left:551.3px;top:841.79px;font-size:11px;line-height:11px;letter-spacing:-0.059px;">29,972</span><span class="t" style="left:693px;top:841.79px;font-size:11px;line-height:11px;letter-spacing:-0.046px;">2,839</span><span class="t" style="left:838.6px;top:841.79px;font-size:11px;line-height:11px;letter-spacing:0.159px;">9.47%</span><span class="t" style="left:128.3px;top:857.79px;font-size:11px;line-height:11px;letter-spacing:-0.514px;">Aug 2010</span><span class="t" style="left:208.4px;top:857.79px;font-size:11px;line-height:11px;color:#1f38a8;letter-spacing:-0.682px;">SAN FRANCISCO</span><span class="t" style="left:296.2px;top:857.79px;font-size:11px;line-height:11px;letter-spacing:-0.551px;">EH_Palomino_BSC_143</span><span class="t" style="left:455.5px;top:857.79px;font-size:11px;line-height:11px;letter-spacing:-0.059px;">12,016</span><span class="t" style="left:551.3px;top:857.79px;font-size:11px;line-height:11px;letter-spacing:-0.059px;">63,035</span><span class="t" style="left:683px;top:857.79px;font-size:11px;line-height:11px;letter-spacing:-0.002px;">-51,019</span><span class="t" style="left:828.6px;top:857.79px;font-size:11px;line-height:11px;letter-spacing:0.145px;">-80.94%</span><span class="t" style="left:208.4px;top:873.79px;font-size:11px;line-height:11px;color:#1f38a8;letter-spacing:-0.822px;">BEACH HAVEN</span><span class="t" style="left:296.2px;top:873.79px;font-size:11px;line-height:11px;letter-spacing:-0.551px;">EH_Palomino_BSC_143</span><span class="t" style="left:455.5px;top:873.79px;font-size:11px;line-height:11px;letter-spacing:-0.059px;">43,905</span><span class="t" style="left:551.3px;top:873.79px;font-size:11px;line-height:11px;letter-spacing:-0.059px;">38,625</span><span class="t" style="left:693px;top:873.79px;font-size:11px;line-height:11px;letter-spacing:-0.046px;">5,280</span><span class="t" style="left:832.6px;top:873.79px;font-size:11px;line-height:11px;letter-spacing:0.115px;">13.67%</span><span class="t" style="left:128.3px;top:889.79px;font-size:11px;line-height:11px;letter-spacing:-0.514px;">Sep 2010</span><span class="t" style="left:208.4px;top:889.79px;font-size:11px;line-height:11px;color:#1f38a8;letter-spacing:-0.682px;">SAN FRANCISCO</span><span class="t" style="left:296.2px;top:889.79px;font-size:11px;line-height:11px;letter-spacing:-0.551px;">EH_Palomino_BSC_143</span><span class="t" style="left:455.5px;top:889.79px;font-size:11px;line-height:11px;letter-spacing:-0.059px;">51,302</span><span class="t" style="left:551.3px;top:889.79px;font-size:11px;line-height:11px;letter-spacing:0.079px;">42,117</span><span class="t" style="left:693px;top:889.79px;font-size:11px;line-height:11px;letter-spacing:-0.046px;">9,185</span><span class="t" style="left:832.6px;top:889.79px;font-size:11px;line-height:11px;letter-spacing:0.115px;">21.81%</span>
<div class="abs" style="left:909px;top:52px;width:17px;height:828px;background:linear-gradient(to right,#f3f1ea,#fcfcf7 60%,#fdfdfa)"></div><div class="abs" style="left:910px;top:69px;width:16px;height:666px;border-radius:3px;background:#8fa6d6"></div><div class="abs" style="left:910px;top:69px;width:15px;height:665px;border-radius:3px;background:#fff"></div><div class="abs" style="left:911px;top:70px;width:13px;height:663px;border-radius:2px;background:linear-gradient(to right,#c9d7fb,#c3d3fa 55%,#b4c8f6)"></div><div class="abs" style="left:914px;top:398px;width:6px;height:1px;background:#eef3ff"></div><div class="abs" style="left:915px;top:399px;width:6px;height:1px;background:#8daaf0"></div><div class="abs" style="left:914px;top:400px;width:6px;height:1px;background:#eef3ff"></div><div class="abs" style="left:915px;top:401px;width:6px;height:1px;background:#8daaf0"></div><div class="abs" style="left:914px;top:402px;width:6px;height:1px;background:#eef3ff"></div><div class="abs" style="left:915px;top:403px;width:6px;height:1px;background:#8daaf0"></div><div class="abs" style="left:914px;top:404px;width:6px;height:1px;background:#eef3ff"></div><div class="abs" style="left:915px;top:405px;width:6px;height:1px;background:#8daaf0"></div><div class="abs" style="left:910px;top:52px;width:15.5px;height:16.5px;border-radius:3px;background:#fff;box-shadow:0 .5px 0 #8aa6de"></div><div class="abs" style="left:911px;top:53px;width:13px;height:14px;border-radius:2px;background:linear-gradient(135deg,#cddafc,#b7caf7)"></div><svg style="left:913px;top:57px" width="9" height="7" viewBox="0 0 9 7"><path d="M1,5.8 L4.5,2.2 L8,5.8" fill="none" stroke="#42546f" stroke-width="1.9"/></svg><div class="abs" style="left:910px;top:862.7px;width:15.5px;height:16.5px;border-radius:3px;background:#fff;box-shadow:0 .5px 0 #8aa6de"></div><div class="abs" style="left:911px;top:863.7px;width:13px;height:14px;border-radius:2px;background:linear-gradient(135deg,#cddafc,#b7caf7)"></div><svg style="left:913px;top:867.7px" width="9" height="7" viewBox="0 0 9 7"><path d="M1,1.5 L4.5,5 L8,1.5" fill="none" stroke="#42546f" stroke-width="1.9"/></svg>
</div><div id="innerbot" class="abs"></div><span class="t" style="left:28.5px;top:891.69px;font-size:11px;line-height:11px;color:#1f3d99;letter-spacing:-0.391px;">Welcome to OCDM: OCDM Main</span><span class="t" style="left:186.5px;top:891.69px;font-size:11px;line-height:11px;color:#1f3d99;letter-spacing:-0.438px;">&gt;</span><span class="t" style="left:199px;top:891.69px;font-size:11px;line-height:11px;color:#222;letter-spacing:-0.061px;">Network Analysis: Network Capacity</span>
<div id="lstrip1" class="abs"></div>
<div id="lstrip2" class="abs"></div>
</body>
</html>
